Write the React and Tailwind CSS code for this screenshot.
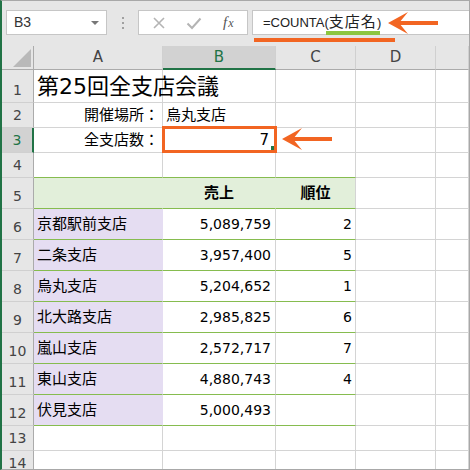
import React from "react";

const ORANGE = "#f26522";

function Arrow({ className }) {
  // open-backed arrow pointing left, 50x24
  return (
    <svg className={className} width="50" height="24" viewBox="0 0 50 24">
      <polygon points="0,12 20,1 11,12 20,23" fill={ORANGE} />
      <rect x="10" y="10" width="40" height="4" fill={ORANGE} />
    </svg>
  );
}

function RowHead({ n, active }) {
  return (
    <div
      className={`flex items-end justify-center pb-[3px] border-b border-b-[#d0d0d0] text-[14px] leading-[18px] ${
        active
          ? "bg-[#d2d2d2] text-[#217346] border-r-2 border-r-[#217346]"
          : "bg-[#e6e6e6] text-[#444] border-r border-r-[#ababab]"
      }`}
    >
      {n}
    </div>
  );
}

function Cell({ children, className = "" }) {
  return (
    <div className={`relative flex items-center whitespace-nowrap border-r border-b ${className}`}>
      {children}
    </div>
  );
}

const plain = "bg-white border-r-[#d4d4d4] border-b-[#d4d4d4]";
const greenBottom = "bg-white border-r-[#d4d4d4] border-b-[#86bc4f]";

const branches = [
  ["京都駅前支店", "5,089,759", "2"],
  ["二条支店", "3,957,400", "5"],
  ["烏丸支店", "5,204,652", "1"],
  ["北大路支店", "2,985,825", "6"],
  ["嵐山支店", "2,572,717", "7"],
  ["東山支店", "4,880,743", "4"],
  ["伏見支店", "5,000,493", ""],
];

function BlankTail() {
  return (
    <>
      <Cell className={plain} />
      <Cell className={plain} />
    </>
  );
}

export default function App() {
  return (
    <div
      className="relative w-[470px] h-[470px] overflow-hidden bg-[#e6e6e6] border-l-2 border-l-[#217346] border-t border-t-[#a8a8a8] border-r border-r-[#a8a8a8] border-b border-b-[#a8a8a8] text-black"
      style={{ fontFamily: '"DejaVu Sans", "Noto Sans CJK JP", sans-serif' }}
    >
      {/* formula bar */}
      <div className="relative h-[45px] flex items-start pt-[9px] pl-[4px]">
        <div className="w-[101px] h-[25px] bg-white border border-[#c6c6c6] flex items-center justify-between pl-[7px] pr-[7px]">
          <span className="text-[14px] text-[#333]" style={{ fontFamily: '"Liberation Sans", sans-serif' }}>
            B3
          </span>
          <span className="w-0 h-0 border-l-[4px] border-r-[4px] border-t-[4px] border-l-transparent border-r-transparent border-t-[#777]" />
        </div>
        <div className="w-[31px] h-[25px] flex flex-col items-center justify-center gap-[3px]">
          <span className="w-[2px] h-[2px] bg-[#a0a0a0]" />
          <span className="w-[2px] h-[2px] bg-[#a0a0a0]" />
          <span className="w-[2px] h-[2px] bg-[#a0a0a0]" />
        </div>
        <div className="w-[110px] h-[25px] bg-white border border-[#c6c6c6] flex items-center pl-[13px]">
          <svg width="14" height="14" viewBox="0 0 14 14" className="mr-[20px]">
            <path d="M2 2 L12 12 M12 2 L2 12" stroke="#b4b4b4" strokeWidth="1.6" />
          </svg>
          <svg width="16" height="14" viewBox="0 0 16 14" className="mr-[21px]">
            <path d="M1.5 7.5 L6 12 L14.5 2.5" stroke="#b4b4b4" strokeWidth="2" fill="none" />
          </svg>
          <span className="italic text-[15px] text-[#555]" style={{ fontFamily: '"Liberation Serif", serif' }}>
            f<span className="text-[12px] ml-[1px]">x</span>
          </span>
        </div>
        <div className="ml-[4px] flex-1 h-[25px] bg-white border border-r-0 border-[#c6c6c6] flex items-center pl-[10px]">
          <span className="text-[13px] text-[#222]" style={{ fontFamily: '"Liberation Sans", "Noto Sans CJK JP", sans-serif' }}>
            =COUNTA(<span className="text-[15px] tracking-[1px]">支店名</span>)
          </span>
        </div>
        <div className="absolute left-[324px] top-[30px] w-[54px] h-[4px] bg-[#8cc63f]" />
        <div className="absolute left-[252px] top-[37px] w-[141px] h-[4px] bg-[#f26522]" />
        <Arrow className="absolute left-[386px] top-[10px]" />
      </div>

      {/* sheet */}
      <div className="grid grid-cols-[32px_129px_113px_80px_80px_1fr] grid-rows-[24px_33px_25px_25px_25px_31px_31px_31px_31px_31px_31px_31px_31px_25px_25px]">
        {/* column headers */}
        <div className="relative bg-[#e6e6e6] border-r border-b border-r-[#ababab] border-b-[#ababab]">
          <svg className="absolute right-[2px] bottom-[2px]" width="18" height="18" viewBox="0 0 18 18">
            <polygon points="18,0 18,18 0,18" fill="#b9b9b9" />
          </svg>
        </div>
        {["A", "B", "C", "D", ""].map((c) => (
          <div
            key={c || "E"}
            className={`flex items-center justify-center text-[15px] border-r border-r-[#d0d0d0] ${
              c === "B"
                ? "bg-[#d2d2d2] text-[#217346] border-b-2 border-b-[#217346]"
                : "bg-[#e6e6e6] text-[#444] border-b border-b-[#ababab]"
            }`}
          >
            {c}
          </div>
        ))}

        {/* row 1 */}
        <RowHead n="1" />
        <Cell className={`${plain} pl-[3px] text-[22px] z-10`}>第25回全支店会議</Cell>
        <Cell className={plain} />
        <Cell className={plain} />
        <BlankTail />

        {/* row 2 */}
        <RowHead n="2" />
        <Cell className={`${plain} justify-end pr-[3px] text-[15px]`}>開催場所：</Cell>
        <Cell className={`${plain} pl-[3px] text-[15px]`}>烏丸支店</Cell>
        <Cell className={plain} />
        <BlankTail />

        {/* row 3 */}
        <RowHead n="3" active />
        <Cell className={`${plain} justify-end pr-[3px] text-[15px]`}>全支店数：</Cell>
        <Cell className={`${plain} justify-end pr-[6px] text-[15px]`}>
          7
          <div className="absolute left-[-1px] right-[-2px] top-[-2px] bottom-[-1px] border-[3px] border-[#f26522] z-20">
            <div className="absolute right-0 bottom-0 w-[3px] h-[4px] bg-[#217346]" />
          </div>
        </Cell>
        <Cell className={plain} />
        <BlankTail />

        {/* row 4 */}
        <RowHead n="4" />
        <Cell className={greenBottom} />
        <Cell className={greenBottom} />
        <Cell className={greenBottom} />
        <BlankTail />

        {/* row 5 */}
        <RowHead n="5" />
        <Cell className="bg-[#e2efda] border-r-[#e2efda] border-b-[#86bc4f]" />
        <Cell className="bg-[#e2efda] border-r-[#e2efda] border-b-[#86bc4f] justify-center font-bold text-[15px]">売上</Cell>
        <Cell className="bg-[#e2efda] border-r-[#d4d4d4] border-b-[#86bc4f] justify-center font-bold text-[15px]">順位</Cell>
        <BlankTail />

        {branches.map(([name, sales, rank], i) => (
          <React.Fragment key={name}>
            <RowHead n={String(6 + i)} />
            <Cell className="bg-[#e5ddf2] border-r-[#e5ddf2] border-b-[#86bc4f] pl-[3px] text-[15px]">{name}</Cell>
            <Cell className={`${greenBottom} justify-end pr-[4px] text-[14px]`}>{sales}</Cell>
            <Cell className={`${greenBottom} justify-end pr-[3px] text-[14px]`}>{rank}</Cell>
            <BlankTail />
          </React.Fragment>
        ))}

        {/* rows 13-14 */}
        {["13", "14"].map((n) => (
          <React.Fragment key={n}>
            <RowHead n={n} />
            <Cell className={plain} />
            <Cell className={plain} />
            <Cell className={plain} />
            <BlankTail />
          </React.Fragment>
        ))}
      </div>

      <Arrow className="absolute left-[280px] top-[126px] z-30" />
    </div>
  );
}
